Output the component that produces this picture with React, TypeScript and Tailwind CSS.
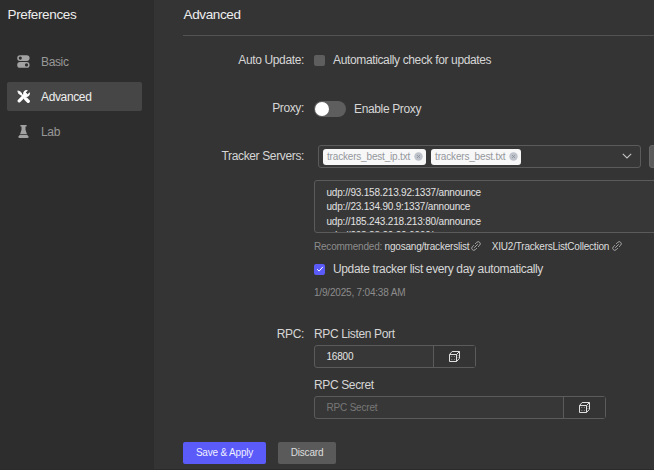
import type { ReactNode } from "react";

const ADDRESSES = [
  "udp://93.158.213.92:1337/announce",
  "udp://23.134.90.9:1337/announce",
  "udp://185.243.218.213:80/announce",
  "udp://208.83.20.20:6969/announce",
];

function ToggleIcon() {
  return (
    <svg viewBox="0 0 13 13" className="h-[13px] w-[13px]" fill="currentColor">
      <path
        fillRule="evenodd"
        d="M3.1.2h6.6a2.9 2.9 0 0 1 0 5.8H3.1a2.9 2.9 0 0 1 0-5.8Zm.2 1.3a1.6 1.6 0 1 0 0 3.2 1.6 1.6 0 0 0 0-3.2Z"
      />
      <path
        fillRule="evenodd"
        d="M3.1 7h6.6a2.9 2.9 0 0 1 0 5.8H3.1a2.9 2.9 0 0 1 0-5.8Zm6.4 1.3a1.6 1.6 0 1 0 0 3.2 1.6 1.6 0 0 0 0-3.2Z"
      />
    </svg>
  );
}

function ToolsIcon() {
  return (
    <svg viewBox="0 0 13 13" className="h-[13px] w-[13px]" fill="none" stroke="currentColor">
      <path d="M3.5 3.5l6 6" strokeWidth="1.6" />
      <path d="M8.7 8.7l2.5 2.5" strokeWidth="3.4" strokeLinecap="round" />
      <path d="M.8.9l2.7 1 1.5 2.4-.8.8-2.5-1.5z" fill="currentColor" strokeWidth=".8" />
      <path d="M8.6 4.5L2.2 10.9" strokeWidth="3.2" strokeLinecap="round" />
      <path
        d="M10.9.3L8.9 2.5l.3 1.5 1.4.3 2.1-2.1a3.6 3.6 0 0 1-4.2 4.7L6.3 4.6A3.5 3.5 0 0 1 10.9.3Z"
        fill="currentColor"
        stroke="none"
      />
    </svg>
  );
}

function LabIcon() {
  return (
    <svg viewBox="0 0 13 13" className="h-[13px] w-[13px]" fill="currentColor">
      <path d="M3.4 0h6.2v1.6H8.5v3.2l1.4 4.1H3.1l1.4-4.1V1.6H3.4z" />
      <path d="M2.9 9.7h7.2l1.4 1.8q.4 1.5-1 1.5h-8q-1.4 0-1-1.5z" />
    </svg>
  );
}

function LinkIcon() {
  return (
    <svg viewBox="0 0 24 24" className="mb-[3px] h-[10px] w-[10px] text-[#b5b5b5]" fill="none" stroke="currentColor" strokeWidth="2.1" strokeLinecap="round">
      <path d="M8.5 15.5l7-7" />
      <path d="M10.5 6.5l3.3-3.3a4.9 4.9 0 0 1 7 7l-3.3 3.3" />
      <path d="M13.5 17.5l-3.3 3.3a4.9 4.9 0 0 1-7-7l3.3-3.3" />
    </svg>
  );
}

function DiceIcon() {
  return (
    <svg viewBox="0 0 11 11" className="h-[11px] w-[11px] text-[#dedede]" fill="none" stroke="currentColor" strokeWidth="1" strokeLinejoin="round">
      <path d="M.5 3.5h7v7h-7z" />
      <path d="M.5 3.5l2.6-3h7.4v6.8l-3 3.2M7.5 3.5l3-3" />
      <path d="M2.4 5.4h.8M4.9 5.4h.8M2.4 8.4h.8M4.9 8.4h.8M9 4v.8M9 6v.8" strokeWidth=".7" />
    </svg>
  );
}

function NavItem({ icon, label, active = false }: { icon: ReactNode; label: string; active?: boolean }) {
  return (
    <li
      className={
        active
          ? "flex h-[29px] items-center gap-[11px] rounded-[2px] bg-[#464646] pl-[10px] text-white"
          : "flex h-[29px] items-center gap-[11px] rounded-[2px] pl-[10px] text-[#a2a2a2]"
      }
    >
      {icon}
      <span className={active ? "text-[#eeeeee]" : "text-[#989898]"}>{label}</span>
    </li>
  );
}

function Row({ label, className, children }: { label: string; className: string; children: ReactNode }) {
  return (
    <div className={`flex gap-[10px] ${className}`}>
      <div className="w-[121px] shrink-0 text-right">{label}</div>
      <div className="min-w-0 flex-1">{children}</div>
    </div>
  );
}

function Tag({ name }: { name: string }) {
  return (
    <span className="flex h-[16px] items-center gap-[4px] rounded-[3px] bg-[#f7f7f8] pr-[3px] pl-[4px] text-[10px] tracking-[-0.18px] text-[#95979c]">
      {name}
      <svg viewBox="0 0 10 10" className="h-[9px] w-[9px]">
        <circle cx="5" cy="5" r="4.7" fill="#bfc3cc" />
        <path d="M3.4 3.4l3.2 3.2M6.6 3.4L3.4 6.6" stroke="#898d96" strokeWidth=".9" />
      </svg>
    </span>
  );
}

function DiceField({ value, placeholder, className }: { value?: string; placeholder?: string; className: string }) {
  return (
    <div className={`flex h-[23px] rounded-[3px] border border-[#5b5b5b] bg-[#373737] text-[10px] tracking-[-0.19px] ${className}`}>
      <div className="flex flex-1 items-center pl-[11.5px]">
        {value ? <span className="text-[#e6e6e6]">{value}</span> : <span className="text-[#777777]">{placeholder}</span>}
      </div>
      <button className="flex w-[42px] items-center justify-center border-l border-[#5b5b5b] bg-[#343434]">
        <DiceIcon />
      </button>
    </div>
  );
}

export default function App() {
  return (
    <div className="flex h-[470px] w-[654px] overflow-hidden border-b border-[#2b2b2b] bg-[#343434] font-['Liberation_Sans',Arial,sans-serif] text-[12px] leading-[14px] tracking-[-0.36px] text-[#d6d6d6]">
      <aside className="w-[154px] shrink-0 bg-[#2d2d2d] px-[7px] pt-[8px]">
        <h2 className="pl-[0.5px] text-[13.5px] text-[#eeeeee]">Preferences</h2>
        <ul className="mt-[25px] flex w-[135px] flex-col gap-[6px]">
          <NavItem icon={<ToggleIcon />} label="Basic" />
          <NavItem icon={<ToolsIcon />} label="Advanced" active />
          <NavItem icon={<LabIcon />} label="Lab" />
        </ul>
      </aside>

      <main className="min-w-0 flex-1 pt-[8px] pl-[29px]">
        <h1 className="h-[28px] border-b border-[#525252] pl-[0.5px] text-[13.5px] text-[#eeeeee]">Advanced</h1>

        <Row label="Auto Update:" className="mt-[17px] h-[14px]">
          <label className="flex items-center gap-[8px]">
            <span className="h-[11px] w-[11px] rounded-[2px] bg-[#5e5e5e]" />
            Automatically check for updates
          </label>
        </Row>

        <Row label="Proxy:" className="mt-[34px] h-[16px]">
          <label className="flex items-center gap-[8px]">
            <span className="flex h-[16px] w-[32px] items-center rounded-full bg-[#5e5e5e] pl-[1px]">
              <span className="h-[14px] w-[14px] rounded-full bg-white" />
            </span>
            Enable Proxy
          </label>
        </Row>

        <Row label="Tracker Servers:" className="mt-[32px] h-[14px]">
          <div className="-mt-[4px] ml-[4px] flex w-[360px] gap-[8px]">
            <div className="flex h-[23px] w-[323px] shrink-0 items-center gap-[5px] rounded-[3px] border border-[#5b5b5b] bg-[#373737] pr-[8px] pl-[4px]">
              <Tag name="trackers_best_ip.txt" />
              <Tag name="trackers_best.txt" />
              <svg viewBox="0 0 10 10" className="mb-[2px] ml-auto h-[10px] w-[10px]" fill="none" stroke="#c4c4c4" strokeWidth="1.1">
                <path d="M.8 2.8L5 7l4.2-4.2" />
              </svg>
            </div>
            <div className="h-[23px] w-[30px] shrink-0 rounded-[3px] border border-[#666666] bg-[#5a5a5a]" />
          </div>
        </Row>

        <div className="mt-[17px] ml-[131px]">
          <div className="h-[53px] w-[360px] overflow-hidden rounded-[3px] border border-[#5b5b5b] bg-[#373737] pt-[5px] pl-[11.5px] text-[10px] leading-[14.4px] tracking-[-0.19px] text-[#e2e2e2]">
            {ADDRESSES.map((address) => (
              <div key={address}>{address}</div>
            ))}
          </div>
          <div className="mt-[7px] flex h-[14px] items-center text-[10px] tracking-[-0.21px]">
            <span className="text-[#8c8c8c]">Recommended:</span>
            <a className="ml-[2.5px] flex items-center gap-[2px] text-[#dedede]">
              ngosang/trackerslist <LinkIcon />
            </a>
            <a className="ml-[10.5px] flex items-center gap-[2.5px] text-[#dedede]">
              XIU2/TrackersListCollection <LinkIcon />
            </a>
          </div>
          <label className="mt-[8px] flex h-[14px] items-center gap-[8px]">
            <span className="flex h-[11px] w-[11px] items-center justify-center rounded-[2px] bg-[#5b5bfa]">
              <svg viewBox="0 0 8 8" className="h-[8px] w-[8px]" fill="none" stroke="white" strokeWidth="1">
                <path d="M1.2 4.2l1.9 1.9L6.9 1.9" />
              </svg>
            </span>
            Update tracker list every day automatically
          </label>
          <div className="mt-[10px] text-[10px] tracking-[-0.19px] text-[#8c8c8c]">1/9/2025, 7:04:38 AM</div>
        </div>

        <Row label="RPC:" className="mt-[27px]">
          <div>RPC Listen Port</div>
          <DiceField value="16800" className="mt-[4px] w-[162px]" />
          <div className="mt-[10px]">RPC Secret</div>
          <DiceField placeholder="RPC Secret" className="mt-[4px] w-[292px]" />
        </Row>

        <div className="mt-[23px] flex gap-[12px] text-[10px] tracking-[-0.19px]">
          <button className="h-[22px] w-[83px] rounded-[2px] bg-[#5b5bfa] text-[#efefff]">Save &amp; Apply</button>
          <button className="h-[22px] w-[58px] rounded-[2px] bg-[#5a5a5a] text-[#dedede]">Discard</button>
        </div>
      </main>
    </div>
  );
}
